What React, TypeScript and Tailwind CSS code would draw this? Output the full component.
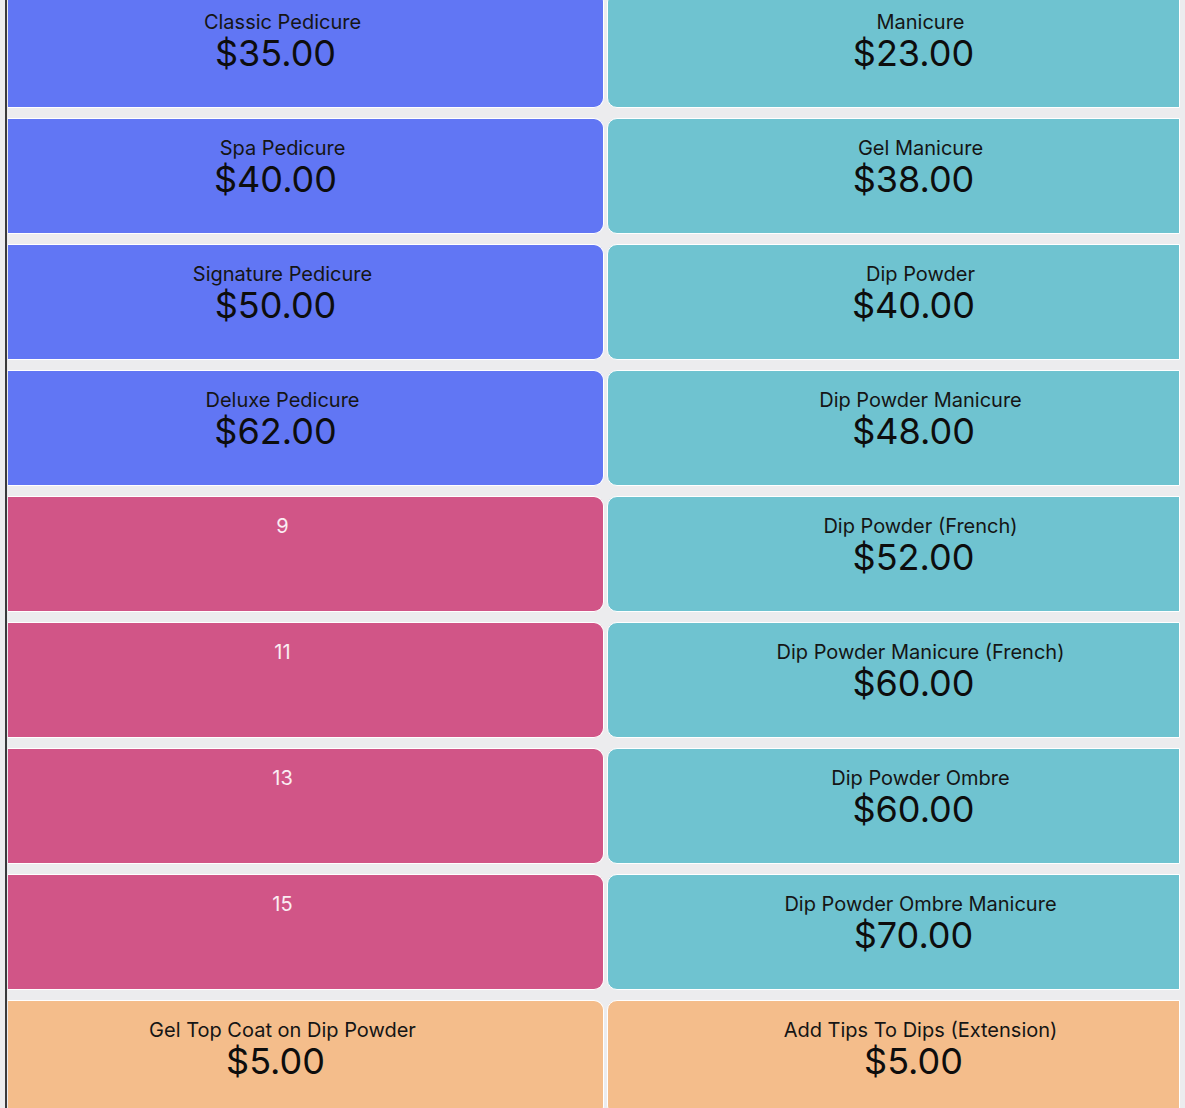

import React from "react";

type Item = { label: string; price?: string; color: string; light?: boolean };

const left: Item[] = [
  { label: "Classic Pedicure", price: "$35.00", color: "bg-[#6176f4]" },
  { label: "Spa Pedicure", price: "$40.00", color: "bg-[#6176f4]" },
  { label: "Signature Pedicure", price: "$50.00", color: "bg-[#6176f4]" },
  { label: "Deluxe Pedicure", price: "$62.00", color: "bg-[#6176f4]" },
  { label: "9", color: "bg-[#d15587]", light: true },
  { label: "11", color: "bg-[#d15587]", light: true },
  { label: "13", color: "bg-[#d15587]", light: true },
  { label: "15", color: "bg-[#d15587]", light: true },
  { label: "Gel Top Coat on Dip Powder", price: "$5.00", color: "bg-[#f4bd8b]" },
];

const right: Item[] = [
  { label: "Manicure", price: "$23.00", color: "bg-[#6fc3d0]" },
  { label: "Gel Manicure", price: "$38.00", color: "bg-[#6fc3d0]" },
  { label: "Dip Powder", price: "$40.00", color: "bg-[#6fc3d0]" },
  { label: "Dip Powder Manicure", price: "$48.00", color: "bg-[#6fc3d0]" },
  { label: "Dip Powder (French)", price: "$52.00", color: "bg-[#6fc3d0]" },
  { label: "Dip Powder Manicure (French)", price: "$60.00", color: "bg-[#6fc3d0]" },
  { label: "Dip Powder Ombre", price: "$60.00", color: "bg-[#6fc3d0]" },
  { label: "Dip Powder Ombre Manicure", price: "$70.00", color: "bg-[#6fc3d0]" },
  { label: "Add Tips To Dips (Extension)", price: "$5.00", color: "bg-[#f4bd8b]" },
];

const Card = ({ item, side }: { item: Item; side: "left" | "right" }) => {
  const shape =
    side === "left"
      ? "rounded-r-[10px] border-y border-r pr-[46px]"
      : "rounded-l-[10px] border pl-[54px]";
  return (
    <div
      className={`h-[116px] border-white flex flex-col items-center pt-[18px] ${shape} ${item.color}`}
    >
      <div
        className={`text-[20px] leading-[22px] ${
          item.light ? "text-white/90" : "text-[#151515]"
        }`}
      >
        {item.label}
      </div>
      {item.price && (
        <div className="text-[36px] leading-[36px] text-[#0d0d0d] pr-[14px] mt-[2px]">
          {item.price}
        </div>
      )}
    </div>
  );
};

export default function App() {
  return (
    <div
      className="h-[1108px] overflow-hidden bg-[#ececee] flex"
      style={{ fontFamily: "Inter, 'Noto Sans', sans-serif" }}
    >
      {/* left edge of the split view */}
      <div className="w-[5px] shrink-0" />
      <div className="w-[2px] shrink-0 bg-[#3a3a3c]" />
      <div className="w-px shrink-0" />

      {/* board */}
      <div className="grid grid-cols-[596px_573px] gap-x-[3px] gap-y-[10px] -mt-2 content-start">
        {left.map((item, i) => (
          <React.Fragment key={i}>
            <Card item={item} side="left" />
            <Card item={right[i]} side="right" />
          </React.Fragment>
        ))}
      </div>
    </div>
  );
}
